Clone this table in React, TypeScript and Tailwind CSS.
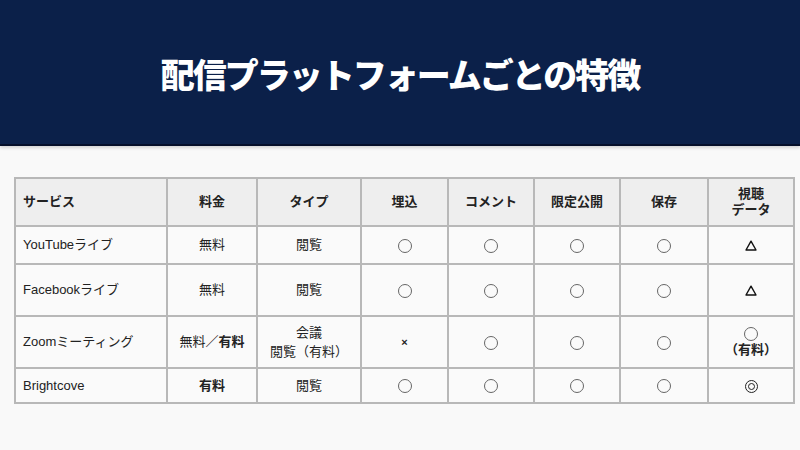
const font = { fontFamily: '"Liberation Sans", "Noto Sans CJK JP", sans-serif' };
const cjk = { fontFamily: '"Noto Sans CJK JP", sans-serif' };

const headers = ["サービス", "料金", "タイプ", "埋込", "コメント", "限定公開", "保存", "視聴\nデータ"];
const widths = ["w-[152px]", "w-[90px]", "w-[104px]", "w-[87px]", "w-[86px]", "w-[86px]", "w-[88px]", "w-[86px]"];

const Circle = () => (
  <span className="inline-block align-middle w-[14px] h-[14px] rounded-full border border-[#666]" />
);

const Tri = () => (
  <svg width="12" height="11" viewBox="0 0 12 11" className="inline-block align-middle">
    <path d="M6 1.2 L11 10 L1 10 Z" fill="none" stroke="#111" strokeWidth="1.4" strokeLinejoin="round" />
  </svg>
);

const rows: { h: string; cells: React.ReactNode[] }[] = [
  {
    h: "h-[38px]",
    cells: ["YouTubeライブ", "無料", "閲覧", <Circle />, <Circle />, <Circle />, <Circle />, <Tri />],
  },
  {
    h: "h-[52px]",
    cells: ["Facebookライブ", "無料", "閲覧", <Circle />, <Circle />, <Circle />, <Circle />, <Tri />],
  },
  {
    h: "h-[52px]",
    cells: [
      "Zoomミーティング",
      <span>
        無料／<b>有料</b>
      </span>,
      <span className="leading-[18px]">
        会議
        <br />
        閲覧（有料）
      </span>,
      <span className="text-[11px] font-bold">×</span>,
      <Circle />,
      <Circle />,
      <Circle />,
      <span className="flex flex-col items-center gap-[2px]">
        <Circle />
        <b className="leading-[14px]">（有料）</b>
      </span>,
    ],
  },
  {
    h: "h-[35px]",
    cells: [
      "Brightcove",
      <b>有料</b>,
      "閲覧",
      <Circle />,
      <Circle />,
      <Circle />,
      <Circle />,
      <span className="inline-flex align-middle items-center justify-center w-[13px] h-[13px] rounded-full border-[1.5px] border-[#222]">
        <span className="w-[7px] h-[7px] rounded-full border-[1.5px] border-[#222]" />
      </span>,
    ],
  },
];

export default function App() {
  return (
    <div className="w-[800px] h-[450px] bg-[#f9f9f9] overflow-hidden" style={font}>
      <div className="h-[146px] bg-[#0b2049] border-b-2 border-[#050f2a] flex items-center justify-center shadow-[0_2px_3px_rgba(0,0,0,0.15)]">
        <h1 className="text-white text-[34px] font-black tracking-[-2px] pt-[2px]" style={cjk}>
          配信プラットフォームごとの特徴
        </h1>
      </div>
      <div className="pl-[14px] pt-[31px]">
        <table className="border-collapse text-[13px] text-[#222]">
          <thead>
            <tr className="h-[48px] bg-[#eeeeee]">
              {headers.map((h, i) => (
                <th
                  key={h}
                  className={`${widths[i]} border-2 border-[#b8b8b8] font-bold leading-[16px] whitespace-pre-line ${
                    i === 0 ? "text-left pl-[7px]" : "text-center"
                  }`}
                >
                  {h}
                </th>
              ))}
            </tr>
          </thead>
          <tbody>
            {rows.map((r, ri) => (
              <tr key={ri} className={`${r.h} bg-[#fafafa]`}>
                {r.cells.map((c, ci) => (
                  <td
                    key={ci}
                    className={`border-2 border-[#b8b8b8] ${ci === 0 ? "text-left pl-[7px]" : "text-center"}`}
                  >
                    {c}
                  </td>
                ))}
              </tr>
            ))}
          </tbody>
        </table>
      </div>
    </div>
  );
}
